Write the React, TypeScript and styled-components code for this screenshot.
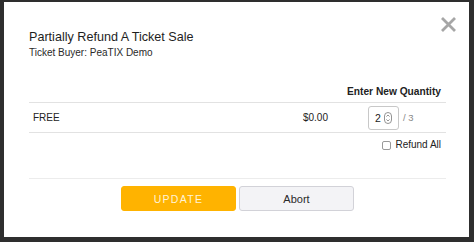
import styled, { createGlobalStyle } from 'styled-components';

const GlobalStyle = createGlobalStyle`
  html, body {
    margin: 0;
    padding: 0;
    background: #2e2e2e;
  }
  body {
    font-family: "Liberation Sans", Arial, sans-serif;
    color: #222;
  }
`;

const Page = styled.div`
  width: 474px;
  height: 242px;
  padding: 2px 5px 5px 4px;
  box-sizing: border-box;
  background: #2e2e2e;
`;

const Modal = styled.div`
  position: relative;
  height: 235px;
  background: #ffffff;
  padding: 0 23px 0 25px;
  box-sizing: border-box;
  display: flex;
  flex-direction: column;
`;

const Close = styled.button`
  position: absolute;
  top: 13px;
  right: 11px;
  width: 19px;
  height: 19px;
  padding: 0;
  border: none;
  background: none;
  display: flex;
  align-items: center;
  justify-content: center;
`;

const Header = styled.div`
  padding-top: 27px;
`;

const Title = styled.h1`
  margin: 0;
  font-size: 12.6px;
  line-height: 17px;
  font-weight: 400;
  color: #1e1e1e;
`;

const Subtitle = styled.p`
  margin: 0;
  font-size: 10px;
  line-height: 13px;
  color: #2a2a2a;
`;

const TableHead = styled.div`
  margin-top: 26px;
  padding-bottom: 3px;
  display: flex;
  justify-content: flex-end;
  padding-right: 5px;
  border-bottom: 1px solid #e2e2e2;
  font-size: 10.2px;
  line-height: 14px;
  font-weight: 700;
  color: #222;
`;

const Row = styled.div`
  display: flex;
  align-items: center;
  height: 29px;
  border-bottom: 1px solid #e2e2e2;
  font-size: 10px;
  color: #222;
`;

const Name = styled.div`
  flex: 1;
  padding-left: 4px;
`;

const Price = styled.div`
  width: 80px;
  text-align: right;
`;

const QtyCell = styled.div`
  width: 118px;
  padding-left: 40px;
  box-sizing: border-box;
  display: flex;
  align-items: center;
  gap: 4px;
`;

const QtyBox = styled.div`
  width: 31px;
  height: 24px;
  box-sizing: border-box;
  border: 1px solid #c8c8c8;
  border-radius: 3px;
  display: flex;
  align-items: center;
  padding-left: 6px;
  gap: 3px;
  font-size: 10.5px;
`;

const Max = styled.span`
  color: #888;
  font-size: 9.5px;
`;

const RefundRow = styled.label`
  display: flex;
  justify-content: flex-end;
  align-items: center;
  gap: 4px;
  padding: 5px 5px 0 0;
  font-size: 10px;
  line-height: 14px;
  color: #222;
`;

const Check = styled.span`
  width: 7px;
  height: 7px;
  border: 1px solid #999;
  border-radius: 2px;
  background: #fff;
`;

const Footer = styled.div`
  margin-top: 26px;
  border-top: 1px solid #ececec;
  padding-top: 7px;
  display: flex;
  justify-content: center;
  gap: 3px;
`;

const Button = styled.button<{ $primary?: boolean }>`
  width: 115px;
  height: 25px;
  border-radius: 3px;
  box-sizing: border-box;
  font-family: "Liberation Sans", Arial, sans-serif;
  font-size: ${({ $primary }) => ($primary ? '10.5px' : '11px')};
  cursor: pointer;
  border: 1px solid ${({ $primary }) => ($primary ? '#ffb300' : '#d2d2d8')};
  background: ${({ $primary }) => ($primary ? '#ffb300' : '#f3f3f6')};
  color: ${({ $primary }) => ($primary ? '#fff3d6' : '#2a2a2a')};
  letter-spacing: ${({ $primary }) => ($primary ? '1.3px' : '0')};
`;

const Spinner = () => (
  <svg width="8" height="12" viewBox="0 0 8 12" fill="none" stroke="#888" strokeWidth="0.9">
    <rect x="0.5" y="0.5" width="7" height="11" rx="3.5" />
    <path d="M2.4 4.6 L4 3 L5.6 4.6" />
    <path d="M2.4 7.4 L4 9 L5.6 7.4" />
  </svg>
);

export default function App() {
  return (
    <Page>
      <GlobalStyle />
      <Modal>
        <Close aria-label="Close">
          <svg width="15" height="15" viewBox="0 0 15 15" stroke="#a6a6a6" strokeWidth="2.8" strokeLinecap="butt">
            <path d="M1 1 L14 14 M14 1 L1 14" />
          </svg>
        </Close>
        <Header>
          <Title>Partially Refund A Ticket Sale</Title>
          <Subtitle>Ticket Buyer: PeaTIX Demo</Subtitle>
        </Header>
        <TableHead>Enter New Quantity</TableHead>
        <Row>
          <Name>FREE</Name>
          <Price>$0.00</Price>
          <QtyCell>
            <QtyBox>
              2
              <Spinner />
            </QtyBox>
            <Max>/ 3</Max>
          </QtyCell>
        </Row>
        <RefundRow>
          <Check />
          Refund All
        </RefundRow>
        <Footer>
          <Button $primary>UPDATE</Button>
          <Button>Abort</Button>
        </Footer>
      </Modal>
    </Page>
  );
}
